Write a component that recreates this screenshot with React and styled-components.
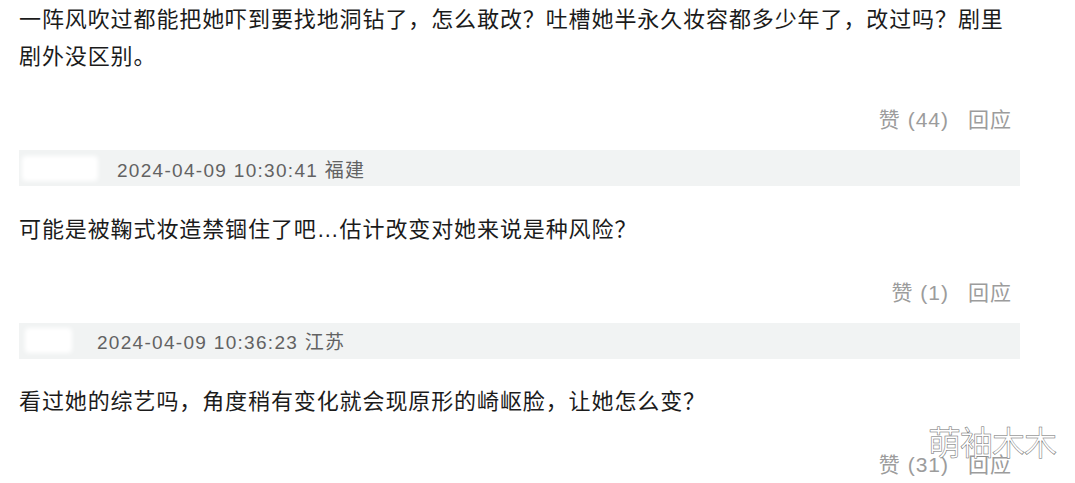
import styled, { createGlobalStyle } from "styled-components";

const GlobalStyle = createGlobalStyle`
    html, body {
        margin: 0;
        padding: 0;
        background: #fff;
    }
    body {
        font-family: "Liberation Sans", "Noto Sans CJK SC", sans-serif;
    }
`;

const Page = styled.div`
    position: relative;
    width: 1075px;
    height: 483px;
    overflow: hidden;
    background: #fff;
`;

const List = styled.div`
    width: 1001px;
    padding: 1px 0 0 19px;
    display: flex;
    flex-direction: column;
`;

const Body = styled.p`
    margin: ${(p) => (p.$first ? "0" : "24.5px")} 0 0;
    font-size: 22px;
    letter-spacing: 0.9px;
    line-height: 37px;
    color: #1b1b1b;
`;

const Actions = styled.div`
    margin-top: 30px;
    padding-right: 8px;
    display: flex;
    justify-content: flex-end;
    gap: 19px;
    font-size: 21px;
    line-height: 30px;
    color: #9c9c9c;
`;

const Action = styled.span`
    letter-spacing: 1px;
`;

const MetaBar = styled.div`
    margin-top: 15px;
    height: 36px;
    display: flex;
    align-items: center;
    background: #f1f3f3;
`;

const NameMask = styled.span`
    display: block;
    margin-left: ${(p) => p.$left}px;
    width: ${(p) => p.$w}px;
    height: 25px;
    background: #fff;
    border-radius: 4px;
    filter: blur(2px);
`;

const Date = styled.span`
    margin-left: ${(p) => p.$gap}px;
    font-size: 19px;
    letter-spacing: 1.3px;
    color: #626262;
`;

const Watermark = styled.div`
    position: absolute;
    right: 19px;
    top: 421px;
    font-family: "Noto Sans CJK SC", sans-serif;
    font-size: 33px;
    font-weight: 400;
    line-height: 40px;
    color: #fff;
    -webkit-text-stroke: 0.5px #6a6a6a;
    letter-spacing: -1px;
`;

const comments = [
    {
        text: "一阵风吹过都能把她吓到要找地洞钻了，怎么敢改？吐槽她半永久妆容都多少年了，改过吗？剧里剧外没区别。",
        likes: 44,
        next: { left: 3, w: 76, gap: 19, date: "2024-04-09 10:30:41 福建" },
    },
    {
        text: "可能是被鞠式妆造禁锢住了吧…估计改变对她来说是种风险？",
        likes: 1,
        next: { left: 6, w: 47, gap: 25, date: "2024-04-09 10:36:23 江苏" },
    },
    {
        text: "看过她的综艺吗，角度稍有变化就会现原形的崎岖脸，让她怎么变？",
        likes: 31,
    },
];

export default function App() {
    return (
        <Page>
            <GlobalStyle />
            <List>
                {comments.map((c, i) => (
                    <div key={i}>
                        <Body $first={i === 0}>{c.text}</Body>
                        <Actions>
                            <Action>赞 ({c.likes})</Action>
                            <Action>回应</Action>
                        </Actions>
                        {c.next && (
                            <MetaBar>
                                <NameMask $left={c.next.left} $w={c.next.w} />
                                <Date $gap={c.next.gap}>{c.next.date}</Date>
                            </MetaBar>
                        )}
                    </div>
                ))}
            </List>
            <Watermark>萌袖木木</Watermark>
        </Page>
    );
}
